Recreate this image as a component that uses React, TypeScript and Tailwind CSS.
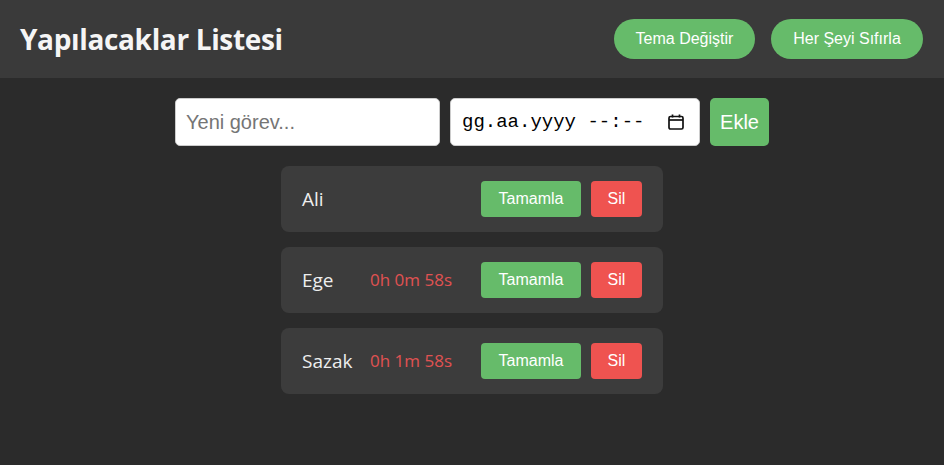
import React from "react";

const tasks = [
  { name: "Ali", timer: "" },
  { name: "Ege", timer: "0h 0m 58s" },
  { name: "Sazak", timer: "0h 1m 58s" },
];

export default function App() {
  return (
    <div className="min-h-[465px] w-full bg-[#2b2b2b]">
      <header className="flex h-[78px] items-center justify-between bg-[#3a3a3a] pl-5 pr-[21px]">
        <h1 className="text-[28px] font-bold text-[#f5f5f5] [font-family:'Open_Sans',sans-serif] tracking-[-0.35px]">
          Yapılacaklar Listesi
        </h1>
        <div className="flex gap-4 [font-family:'Liberation_Sans',Arial,sans-serif]">
          <button className="h-10 w-[141px] rounded-full bg-[#66bb6a] text-[16px] text-white">
            Tema Değiştir
          </button>
          <button className="h-10 w-[152px] rounded-full bg-[#66bb6a] text-[16px] text-white">
            Her Şeyi Sıfırla
          </button>
        </div>
      </header>

      <div className="mt-5 flex justify-center gap-[10px]">
        <div className="flex h-12 w-[265px] items-center rounded-[5px] border border-[#ccc] bg-white pl-[10px] [font-family:'Liberation_Sans',Arial,sans-serif] text-[20px] text-[#757575]">
          Yeni görev...
        </div>
        <div className="flex h-12 w-[250px] items-center justify-between rounded-[5px] border border-[#ccc] bg-white pl-[11px] pr-[14px]">
          <span className="text-[19px] text-black [font-family:'Liberation_Mono',monospace]">
            gg.aa.yyyy --:--
          </span>
          <svg width="18" height="18" viewBox="0 0 18 18" fill="none">
            <rect x="2" y="3.5" width="14" height="12.5" rx="1.5" stroke="#111" strokeWidth="1.7" />
            <line x1="2" y1="7" x2="16" y2="7" stroke="#111" strokeWidth="1.7" />
            <line x1="5.5" y1="1.5" x2="5.5" y2="4.5" stroke="#111" strokeWidth="1.7" />
            <line x1="12.5" y1="1.5" x2="12.5" y2="4.5" stroke="#111" strokeWidth="1.7" />
          </svg>
        </div>
        <button className="h-12 w-[59px] rounded-[5px] bg-[#66bb6a] text-[20px] text-white [font-family:'Liberation_Sans',Arial,sans-serif]">
          Ekle
        </button>
      </div>

      <div className="mt-5 flex flex-col items-center gap-[15px]">
        {tasks.map((t) => (
          <div
            key={t.name}
            className="flex h-[66px] w-[382px] items-center rounded-[8px] bg-[#3c3c3c] pl-[21px] pr-[21px]"
          >
            <span className="w-[68px] text-[19px] text-[#eeeeee] [font-family:'Open_Sans',sans-serif]">
              {t.name}
            </span>
            <span className="flex-1 text-[17px] text-[#e05252] [font-family:'Open_Sans',sans-serif]">
              {t.timer}
            </span>
            <div className="flex gap-[10px] [font-family:'Liberation_Sans',Arial,sans-serif]">
              <button className="h-9 w-[100px] rounded-[4px] bg-[#66bb6a] text-[16px] text-white">
                Tamamla
              </button>
              <button className="h-9 w-[51px] rounded-[4px] bg-[#ef5350] text-[16px] text-white">
                Sil
              </button>
            </div>
          </div>
        ))}
      </div>
    </div>
  );
}
